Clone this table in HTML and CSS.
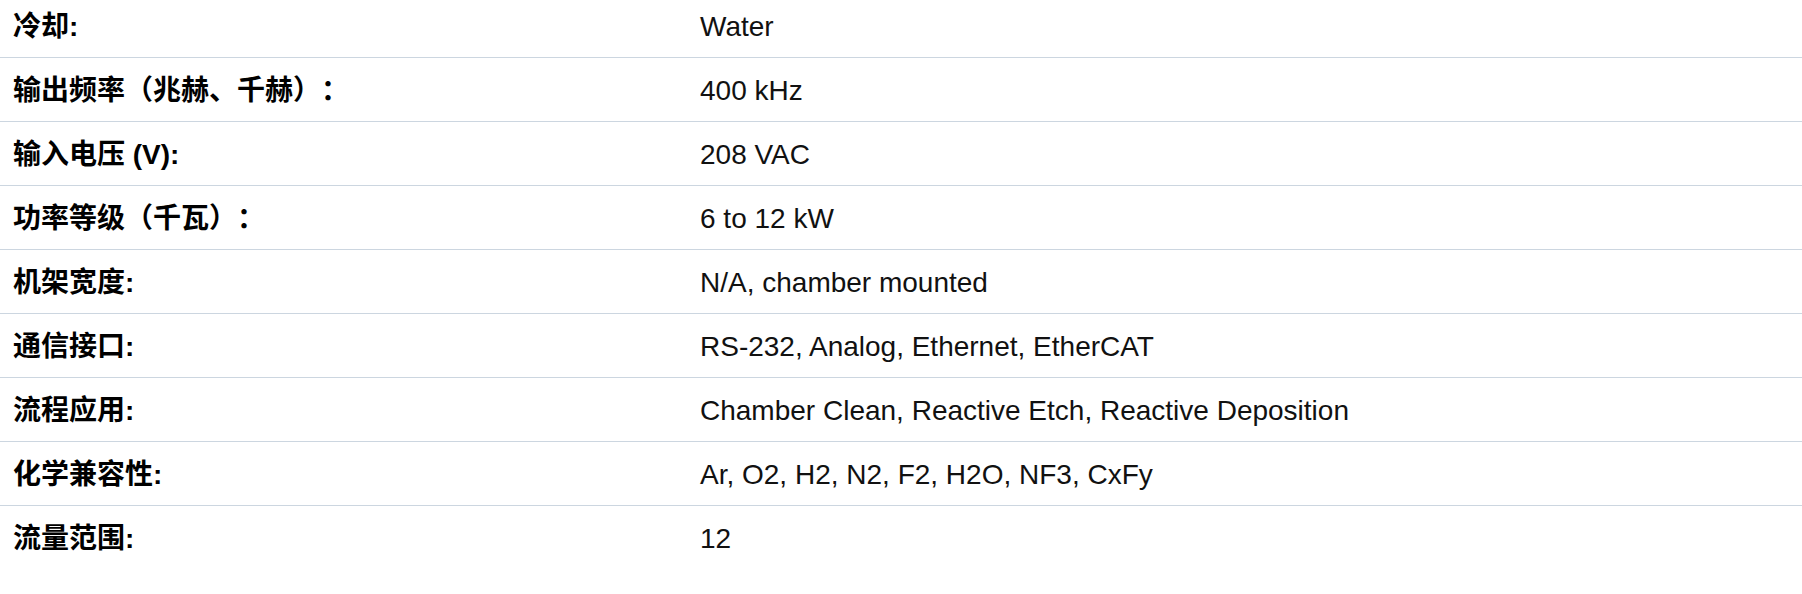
FILE: index.html
```html
<!DOCTYPE html>
<html lang="zh-CN">
<head>
<meta charset="utf-8">
<title>Specs</title>
<link rel="stylesheet" href="styles.css">
</head>
<body>
<div class="specs">
  <div class="row"><div class="label">冷却:</div><div class="value">Water</div></div>
  <div class="row"><div class="label">输出频率（兆赫、千赫）：</div><div class="value">400 kHz</div></div>
  <div class="row"><div class="label">输入电压 (V):</div><div class="value">208 VAC</div></div>
  <div class="row"><div class="label">功率等级（千瓦）：</div><div class="value">6 to 12 kW</div></div>
  <div class="row"><div class="label">机架宽度:</div><div class="value">N/A, chamber mounted</div></div>
  <div class="row"><div class="label">通信接口:</div><div class="value">RS-232, Analog, Ethernet, EtherCAT</div></div>
  <div class="row"><div class="label">流程应用:</div><div class="value">Chamber Clean, Reactive Etch, Reactive Deposition</div></div>
  <div class="row"><div class="label">化学兼容性:</div><div class="value">Ar, O2, H2, N2, F2, H2O, NF3, CxFy</div></div>
  <div class="row"><div class="label">流量范围:</div><div class="value">12</div></div>
</div>
</body>
</html>
```
FILE: styles.css
```css
html, body {
  margin: 0;
  padding: 0;
  background: #ffffff;
}
body {
  font-family: "Liberation Sans", Arial, "Noto Sans CJK SC", sans-serif;
  font-size: 28px;
  line-height: 32px;
  color: #111111;
  text-spacing-trim: space-all;
}
.specs {
  display: flex;
  flex-direction: column;
}
.row {
  display: grid;
  grid-template-columns: 687px 1fr;
  border-bottom: 1px solid #ccd6e0;
}
.row:last-child {
  border-bottom: none;
}
.label, .value {
  padding: 17px 13px 14px 13px;
}
.row:first-child .label,
.row:first-child .value {
  padding-top: 11px;
}
.label {
  font-weight: bold;
  color: #000000;
}
.value {
  font-weight: normal;
}
```
